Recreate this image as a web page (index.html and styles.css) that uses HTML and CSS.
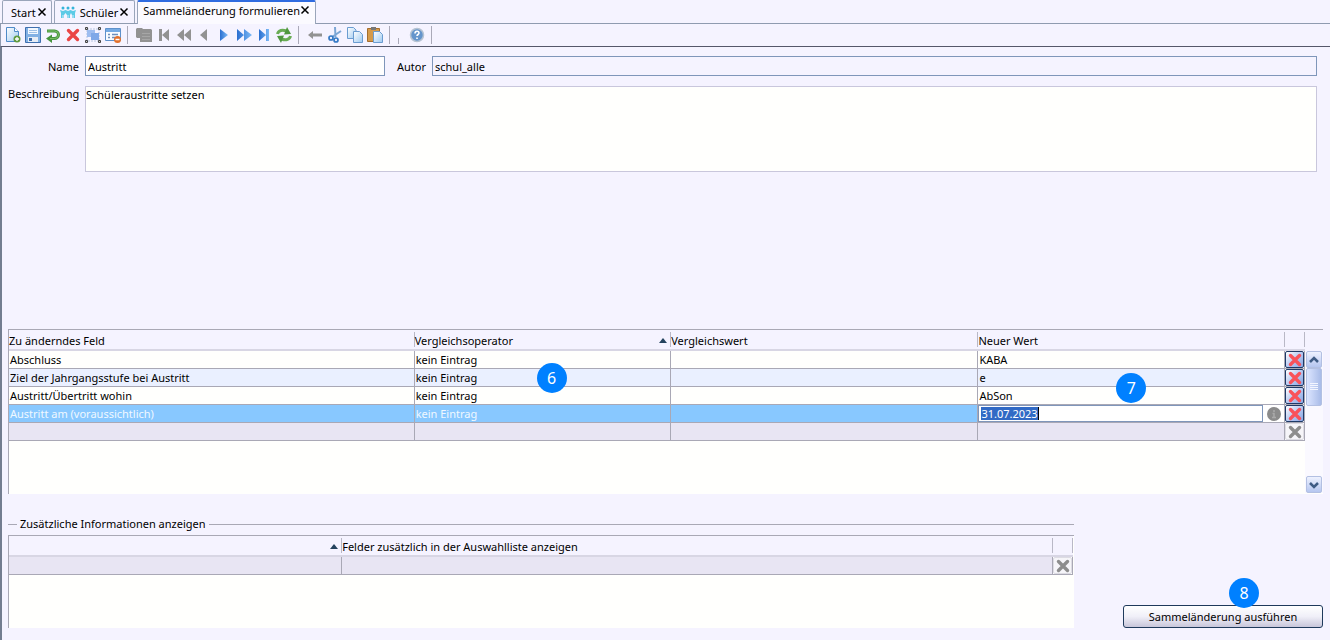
FILE: index.html
```html
<!DOCTYPE html>
<html lang="de">
<head>
<meta charset="utf-8">
<title>Sammeländerung formulieren</title>
<link rel="stylesheet" href="styles.css">
</head>
<body>
<svg class="defs" aria-hidden="true">
  <defs>
    <linearGradient id="page" x1="0" y1="0" x2="1" y2="1"><stop offset="0" stop-color="#fff"/><stop offset="1" stop-color="#9fcaf0"/></linearGradient>
    <linearGradient id="play" x1="0" y1="0" x2="1" y2="0"><stop offset="0" stop-color="#2a6fd0"/><stop offset="1" stop-color="#7dbaf6"/></linearGradient>
    <symbol id="close" viewBox="0 0 10 10"><path d="M1.500 1.500L8.500 8.500M8.500 1.500L1.500 8.500" stroke="#000" stroke-width="1.500"/></symbol>
    <symbol id="delete" viewBox="0 0 16 16"><path d="M3.500 3.500L12.500 12.500M12.500 3.500L3.500 12.500" stroke="currentColor" stroke-width="3.400" stroke-linecap="round"/></symbol>
    <symbol id="sheet" viewBox="0 0 16 16"><path d="M.500 .500h6l2.500 2.500v8.500H.500z" fill="url(#page)" stroke="#6a9cd0"/><path d="M6.500 4.500h6l3 3v8h-9z" fill="url(#page)" stroke="#6a9cd0"/></symbol>
  </defs>
</svg>

<nav class="tabs">
  <div class="tab"><a href="#start">Start</a><button class="tab-close" aria-label="Start schließen"><svg viewBox="0 0 10 10"><use href="#close"/></svg></button></div>
  <div class="tab tab-pupils">
    <svg class="people" viewBox="0 0 16 14" fill="#35b5da"><circle cx="3" cy="2" r="1.500"/><circle cx="8" cy="2" r="1.500"/><circle cx="13" cy="2" r="1.500"/><path d="M0 4l3 1 2.500-1L8 5l2.500-1L13 5l3-1-1 3v5h-3V9l-1-2-1 2v3H7V9L5.500 7 4 9v3H1V7z" fill="#5ccbe6"/><path d="M3 9v4M8 9v4M13 9v4" stroke="#f5f3ff" stroke-width=".800"/></svg>
    <a href="#schueler">Schüler</a><button class="tab-close" aria-label="Schüler schließen"><svg viewBox="0 0 10 10"><use href="#close"/></svg></button>
  </div>
  <div class="tab tab-active"><a href="#sammel">Sammeländerung formulieren</a><button class="tab-close" aria-label="Sammeländerung schließen"><svg viewBox="0 0 10 10"><use href="#close"/></svg></button></div>
</nav>

<div class="toolbar" role="toolbar" aria-label="Werkzeuge">
  <button aria-label="Neu"><svg viewBox="0 0 16 16"><path d="M1.500 .500h8l4 4v10h-12z" fill="url(#page)" stroke="#4f8bc8"/><path d="M9.500 .500v4h4" fill="#fff" stroke="#4f8bc8"/><circle cx="12" cy="12" r="3.500" fill="#609b3e"/><path d="M12 10v4M10 12h4" stroke="#fff" stroke-width="1.300"/></svg></button>
  <button aria-label="Speichern"><svg viewBox="0 0 16 16"><path d="M.500 .500h14l1 1v14H.500z" fill="#82b1e4" stroke="#3f70ae"/><path d="M3 1h10v6H3z" fill="#f2f8ff"/><path d="M3 10h10v5H3z" fill="#e7edf6"/><path d="M4 11h3v3H4z" fill="#3f70ae"/><path d="M4 3.500h8M4 5.500h8" stroke="#9dc0e6"/></svg></button>
  <button aria-label="Rückgängig"><svg viewBox="0 0 16 16"><path d="M2 4h7.500a4 3.800 0 0 1 0 7.600H6" fill="none" stroke="#46943d" stroke-width="3"/><path d="M7 7.500V16L1 11.600z" fill="#46943d"/><path d="M2.500 4h7a4 3.800 0 0 1 0 7.600H5" fill="none" stroke="#7fbf68"/></svg></button>
  <button class="red" aria-label="Löschen"><svg viewBox="0 0 16 16"><use href="#delete"/></svg></button>
  <button aria-label="Auswahl"><svg viewBox="0 0 16 16"><path d="M2 2h12v12H2z" fill="none" stroke="#b6c5df" stroke-dasharray="2 1"/><path d="M2 3h8v7H2z" fill="#9dbdf0"/><path d="M6 6h8v7H6z" fill="#7ea8e8"/><path d="M.500 .500h2v2h-2zM13.500 .500h2v2h-2zM.500 13.500h2v2h-2zM13.500 13.500h2v2h-2z" fill="#ccc" stroke="#444"/></svg></button>
  <button aria-label="Eintrag entfernen"><svg viewBox="0 0 16 16"><path d="M.500 1.500h15v12H.500z" fill="#f8fbff" stroke="#5e91cb"/><path d="M1 2h14v3H1z" fill="#75aae3"/><path d="M3 7.500h2M7 7.500h6M3 10.500h2M7 10.500h3" stroke="#6d8fbc" stroke-width="1.300"/><circle cx="12.500" cy="12.500" r="3.500" fill="#e2702b"/><path d="M10.500 12.500h4" stroke="#fff" stroke-width="1.500"/></svg></button>
  <hr>
  <button class="gray" aria-label="Liste"><svg viewBox="0 0 16 16" fill="currentColor"><path d="M0 2l1-1h5l1 1h8l1 1v12H4v-4H1L0 10z"/><path d="M6 6.500h8M6 9.500h8M6 12.500h8" stroke="#a6a6a6"/></svg></button>
  <button class="gray" aria-label="Erster"><svg viewBox="0 0 16 16" fill="currentColor"><path d="M3 2h3v12H3zM13 2v12L6 8z"/></svg></button>
  <button class="gray" aria-label="Zurückspringen"><svg viewBox="0 0 16 16" fill="currentColor"><path d="M8 2v12L1 8zM15 2v12L8 8z"/></svg></button>
  <button class="gray" aria-label="Zurück"><svg viewBox="0 0 16 16" fill="currentColor"><path d="M11 2v12L4 8z"/></svg></button>
  <button aria-label="Weiter"><svg viewBox="0 0 16 16" fill="url(#play)"><path d="M4 2v12l8-6z"/></svg></button>
  <button aria-label="Vorspringen"><svg viewBox="0 0 16 16" fill="url(#play)"><path d="M1 2v12l7-6zM8 2v12l8-6z"/></svg></button>
  <button aria-label="Letzter"><svg viewBox="0 0 16 16" fill="url(#play)"><path d="M3 2v12l7-6zM10 2h3v12h-3z"/></svg></button>
  <button aria-label="Aktualisieren"><svg viewBox="0 0 16 16"><path d="M1.500 7c1-4 5-4.500 9-3" fill="none" stroke="#69ac54" stroke-width="3"/><path d="M11 0l4 7-7 .500z" fill="#4f973f"/><path d="M14.500 9c-1 4-5 4.500-9 3" fill="none" stroke="#69ac54" stroke-width="3"/><path d="M5 16L1 9l7-.500z" fill="#4f973f"/></svg></button>
  <hr>
  <button class="gray" aria-label="Zurück zur Liste"><svg viewBox="0 0 16 16" fill="currentColor"><path d="M1 8l5-4v2.500h9v3H6V12z"/></svg></button>
  <button aria-label="Ausschneiden"><svg viewBox="0 0 16 16" fill="none"><path d="M8 0l.500 10M14 4l-9 6" stroke="#7ca6d5" stroke-width="2"/><circle cx="4" cy="11" r="2" stroke="#3479c5" stroke-width="1.700"/><circle cx="9" cy="13" r="2" stroke="#3479c5" stroke-width="1.700"/></svg></button>
  <button aria-label="Kopieren"><svg viewBox="0 0 16 16"><use href="#sheet"/></svg></button>
  <button aria-label="Einfügen"><svg viewBox="0 0 16 16"><path d="M.500 1.500h12v13H.500z" fill="#d59a49" stroke="#a56d2c"/><path d="M4 0h5v3H4z" fill="#777"/><path d="M6.500 4.500h6l3 3v8h-9z" fill="url(#page)" stroke="#6a9cd0"/></svg></button>
  <hr>
  <span class="stub"></span>
  <button aria-label="Hilfe"><svg viewBox="0 0 16 16"><circle cx="8" cy="8" r="6.500" fill="#6495cc" stroke="#b6c3d2" stroke-width="1.500"/><path d="M6 6.500c0-3 4-3 4-.500 0 1.500-2 1.500-2 3M8 10.500v1.500" fill="none" stroke="#fff" stroke-width="1.600"/></svg></button>
  <hr>
</div>

<main class="content">
  <form class="form">
    <label for="name">Name</label>
    <div class="form-row">
      <input class="field name" id="name" value="Austritt">
      <label for="autor">Autor</label>
      <input class="field autor" id="autor" value="schul_alle" readonly>
    </div>
    <label class="label-top" for="beschreibung">Beschreibung</label>
    <textarea id="beschreibung">Schüleraustritte setzen</textarea>
  </form>

  <section class="grid-panel">
    <table class="grid">
      <colgroup><col class="c-field"><col class="c-op"><col class="c-cmp"><col><col class="c-del"></colgroup>
      <thead><tr><th><span>Zu änderndes Feld</span></th><th class="sorted"><span>Vergleichsoperator</span></th><th><span>Vergleichswert</span></th><th><span>Neuer Wert</span></th><th><span></span></th></tr></thead>
      <tbody>
        <tr><td>Abschluss</td><td>kein Eintrag</td><td></td><td>KABA</td><td class="act"><button class="del" aria-label="Zeile löschen"><svg viewBox="0 0 16 16"><use href="#delete"/></svg></button></td></tr>
        <tr class="alt"><td>Ziel der Jahrgangsstufe bei Austritt</td><td class="marked">kein Eintrag<span class="badge badge-op">6</span></td><td></td><td class="marked">e<span class="badge badge-value">7</span></td><td class="act"><button class="del" aria-label="Zeile löschen"><svg viewBox="0 0 16 16"><use href="#delete"/></svg></button></td></tr>
        <tr><td>Austritt/Übertritt wohin</td><td>kein Eintrag</td><td></td><td>AbSon</td><td class="act"><button class="del" aria-label="Zeile löschen"><svg viewBox="0 0 16 16"><use href="#delete"/></svg></button></td></tr>
        <tr class="selected"><td>Austritt am (voraussichtlich)</td><td>kein Eintrag</td><td></td><td class="edit"><div class="editor"><div class="edit-box" role="textbox" contenteditable="true" aria-label="Neuer Wert"><mark>31.07.2023</mark></div><svg class="info" viewBox="0 0 14 14"><circle cx="7" cy="7" r="7" fill="#8b8b8b"/><path d="M7 3v2M5.500 6.500H7v4M5 10.500h4" fill="none" stroke="#aaa" stroke-width="1.500"/></svg></div></td><td class="act"><button class="del" aria-label="Zeile löschen"><svg viewBox="0 0 16 16"><use href="#delete"/></svg></button></td></tr>
        <tr class="new"><td></td><td></td><td></td><td></td><td class="act"><button class="del off" aria-label="Leere Zeile" disabled><svg viewBox="0 0 16 16"><use href="#delete"/></svg></button></td></tr>
      </tbody>
    </table>
    <div class="scroll">
      <button aria-label="Nach oben"><svg viewBox="0 0 10 10"><path d="M1 7l4-4 4 4" fill="none" stroke="#3f5c85" stroke-width="2.500"/></svg></button>
      <div class="thumb"><svg viewBox="0 0 8 8"><path d="M0 .500h8M0 2.500h8M0 4.500h8M0 6.500h8" stroke="#f3f6ff"/></svg></div>
      <button class="down" aria-label="Nach unten"><svg viewBox="0 0 10 10"><path d="M1 3l4 4 4-4" fill="none" stroke="#3f5c85" stroke-width="2.500"/></svg></button>
    </div>
  </section>

  <div class="bottom">
    <section class="extra">
      <h2>Zusätzliche Informationen anzeigen</h2>
      <div class="grid-panel small">
        <table class="grid">
          <colgroup><col class="c-extra"><col><col class="c-del"></colgroup>
          <thead><tr><th class="sorted"><span></span></th><th><span>Felder zusätzlich in der Auswahlliste anzeigen</span></th><th><span></span></th></tr></thead>
          <tbody><tr class="new"><td></td><td></td><td class="act"><button class="del off" aria-label="Leere Zeile" disabled><svg viewBox="0 0 16 16"><use href="#delete"/></svg></button></td></tr></tbody>
        </table>
      </div>
    </section>
    <div class="run-wrap"><button class="run">Sammeländerung ausführen</button><span class="badge badge-run">8</span></div>
  </div>
</main>
</body>
</html>
```
FILE: styles.css
```css
* { box-sizing: border-box; }
body {
  margin: 0;
  min-height: 100vh;
  display: flex;
  flex-direction: column;
  background: #f5f3ff;
  color: #000;
  font: 11px/16px "Noto Sans", "Open Sans", sans-serif;
}
button, input, textarea { font: inherit; color: inherit; margin: 0; }
button { padding: 0; border: 0; background: none; }
a { color: inherit; text-decoration: none; }
svg { display: block; }
.defs { position: absolute; width: 0; height: 0; }

/* Tabs */
.tabs { display: flex; align-items: flex-end; height: 24px; padding-left: 2px; gap: 2px; border-bottom: 1px solid #8f9bb0; }
.tab {
  display: flex; align-items: center; gap: 1px;
  height: 23px; padding: 1px 4px 0 8px;
  border: 1px solid #9aa5ba; border-bottom: 0; border-radius: 2px 2px 0 0;
  white-space: nowrap;
}
.tab-pupils { padding: 1px 5px 0 5px; }
.people { width: 16px; height: 14px; margin-right: 3px; }
.tab-active {
  height: 24px; padding: 0 5px 4px 5px; margin-bottom: -1px; gap: 0;
  border-top: 2px solid #2f6be0; background: #fbfaff;
}
.tab-close { padding-bottom: 2px; }
.tab-close svg { width: 10px; height: 10px; }

/* Toolbar */
.toolbar { display: flex; align-items: center; gap: 4px; height: 23px; padding-left: 4px; border-left: 1px solid #8f9bb0; border-bottom: 1px solid #55576a; }
.toolbar svg { width: 16px; height: 16px; }
.toolbar hr { width: 1px; height: 18px; margin: 0 4px 0 2px; border: 0; background: #aaa9b8; }
.gray { color: #929292; }
.red { color: #ea4545; }
.stub { width: 1px; height: 6px; background: #aaa9b8; align-self: flex-end; margin: 0 6px 2px 0; }

/* Content */
.content { flex: 1; padding: 9px 7px 12px 6px; border-left: 2px solid #737d90; }
.form { display: grid; grid-template-columns: 71px 1fr; column-gap: 6px; row-gap: 10px; padding-right: 6px; }
.form > label { text-align: right; padding-top: 3px; }
.form > .label-top { padding-top: 0; }
.form-row { display: flex; align-items: center; }
.form-row label { margin: 2px 6px 0 12px; }
.field { height: 20px; padding: 0 2px; border: 1px solid #7f96ba; background: #fff; outline: 0; }
.name { width: 300px; }
.autor { flex: 1; min-width: 0; background: #f5f3ff; }
textarea { display: block; width: 100%; height: 86px; padding: 0; border: 1px solid #c9c7dc; background: #fffffd; resize: none; outline: 0; }

/* Data grids */
.grid-panel { display: flex; align-items: flex-start; height: 165px; margin-top: 157px; border-top: 1px solid #a9a8b5; border-left: 1px solid #a9a8b5; background: #fffffd; }
.grid { flex: 1; width: 100%; table-layout: fixed; border-collapse: separate; border-spacing: 0; }
.c-field { width: 31.3%; }
.c-op { width: 19.8%; }
.c-cmp { width: 23.7%; }
.c-del { width: 20px; }
.c-extra { width: 31.3%; }
.grid th { height: 21px; padding: 0; background: #f5f3ff; border-bottom: 2px solid #d8d6e4; font-weight: 400; text-align: left; }
.grid th span { display: block; height: 15px; line-height: 17px; border-right: 1px solid #b9b8c6; white-space: nowrap; }
.sorted { position: relative; }
.sorted::after { content: ""; position: absolute; right: 4px; top: 8px; border: 5px solid transparent; border-top: 0; border-bottom-color: #24435e; border-left-width: 4px; border-right-width: 4px; }
.grid td { height: 18px; padding: 0 1px; border-right: 1px solid #a9a8b5; border-bottom: 1px solid #a9a8b5; line-height: 17px; white-space: nowrap; }
.alt td { background: #eaf0ff; }
.selected td { background: #88c8ff; color: #f0f8ff; }
.new td { background: #e8e5f3; }
.marked { position: relative; }
.grid .act, .grid .edit { padding: 0; background: #fff; }
.del { display: flex; align-items: center; justify-content: center; width: 100%; height: 17px; border: 1px solid #1f3a66; border-radius: 2px; background: linear-gradient(135deg, #fff, #b9cbf2 50%, #8aa8e4); color: #f9525a; }
.del svg { width: 16px; height: 16px; }
.off { border-color: #dddce3; background: #f6f5f9; color: #8d8d8d; }
.editor { display: flex; align-items: center; height: 17px; }
.edit-box { flex: 1; height: 17px; padding: 0 2px; border: 1px solid #7f96ba; line-height: 15px; outline: 0; }
.edit-box mark { display: inline-block; height: 13px; line-height: 14px; background: #316ac5; color: #fff; border-right: 1px solid #000; vertical-align: top; margin-top: 1px; }
.info { width: 14px; height: 14px; margin: 0 3px 0 4px; }

.scroll { width: 18px; height: 163px; display: flex; flex-direction: column; padding-left: 1px; border-top: 21px solid #f5f3ff; background: #faf9ff; }
.scroll button, .thumb { display: flex; align-items: center; justify-content: center; width: 16px; height: 17px; border: 1px solid #b3c0e2; border-radius: 2px; background: linear-gradient(#eef2ff, #b5c6f0); }
.scroll button svg { width: 10px; height: 10px; }
.scroll .thumb { height: 38px; background: linear-gradient(90deg, #dce5ff, #a9bce8); }
.thumb svg { width: 8px; height: 8px; }
.scroll .down { margin-top: auto; }

/* Lower area */
.bottom { display: flex; align-items: flex-end; justify-content: space-between; margin-top: 22px; }
.extra { width: 81.1%; }
.extra h2 { display: flex; align-items: center; gap: 3px; margin: 0; font-size: 11px; font-weight: 400; }
.extra h2::before, .extra h2::after { content: ""; height: 1px; background: #a9a8b5; }
.extra h2::before { width: 9px; }
.extra h2::after { flex: 1; }
.small { height: 93px; margin-top: 3px; }
.small .grid { margin-right: 1px; }
.run-wrap { position: relative; }
.run { display: block; width: 200px; height: 23px; padding-top: 1px; border: 1px solid #1f3a5c; border-radius: 3px; background: linear-gradient(#fff, #f0eff8 50%, #c8c6da); }

/* Step markers */
.badge { position: absolute; width: 30px; height: 30px; border-radius: 50%; background: #0080ff; color: #fff; font-size: 16px; line-height: 30px; text-align: center; z-index: 1; }
.badge-op { left: 122px; top: -6px; }
.badge-value { left: 138px; top: 4px; }
.badge-run { right: 64px; bottom: 20px; }
```
